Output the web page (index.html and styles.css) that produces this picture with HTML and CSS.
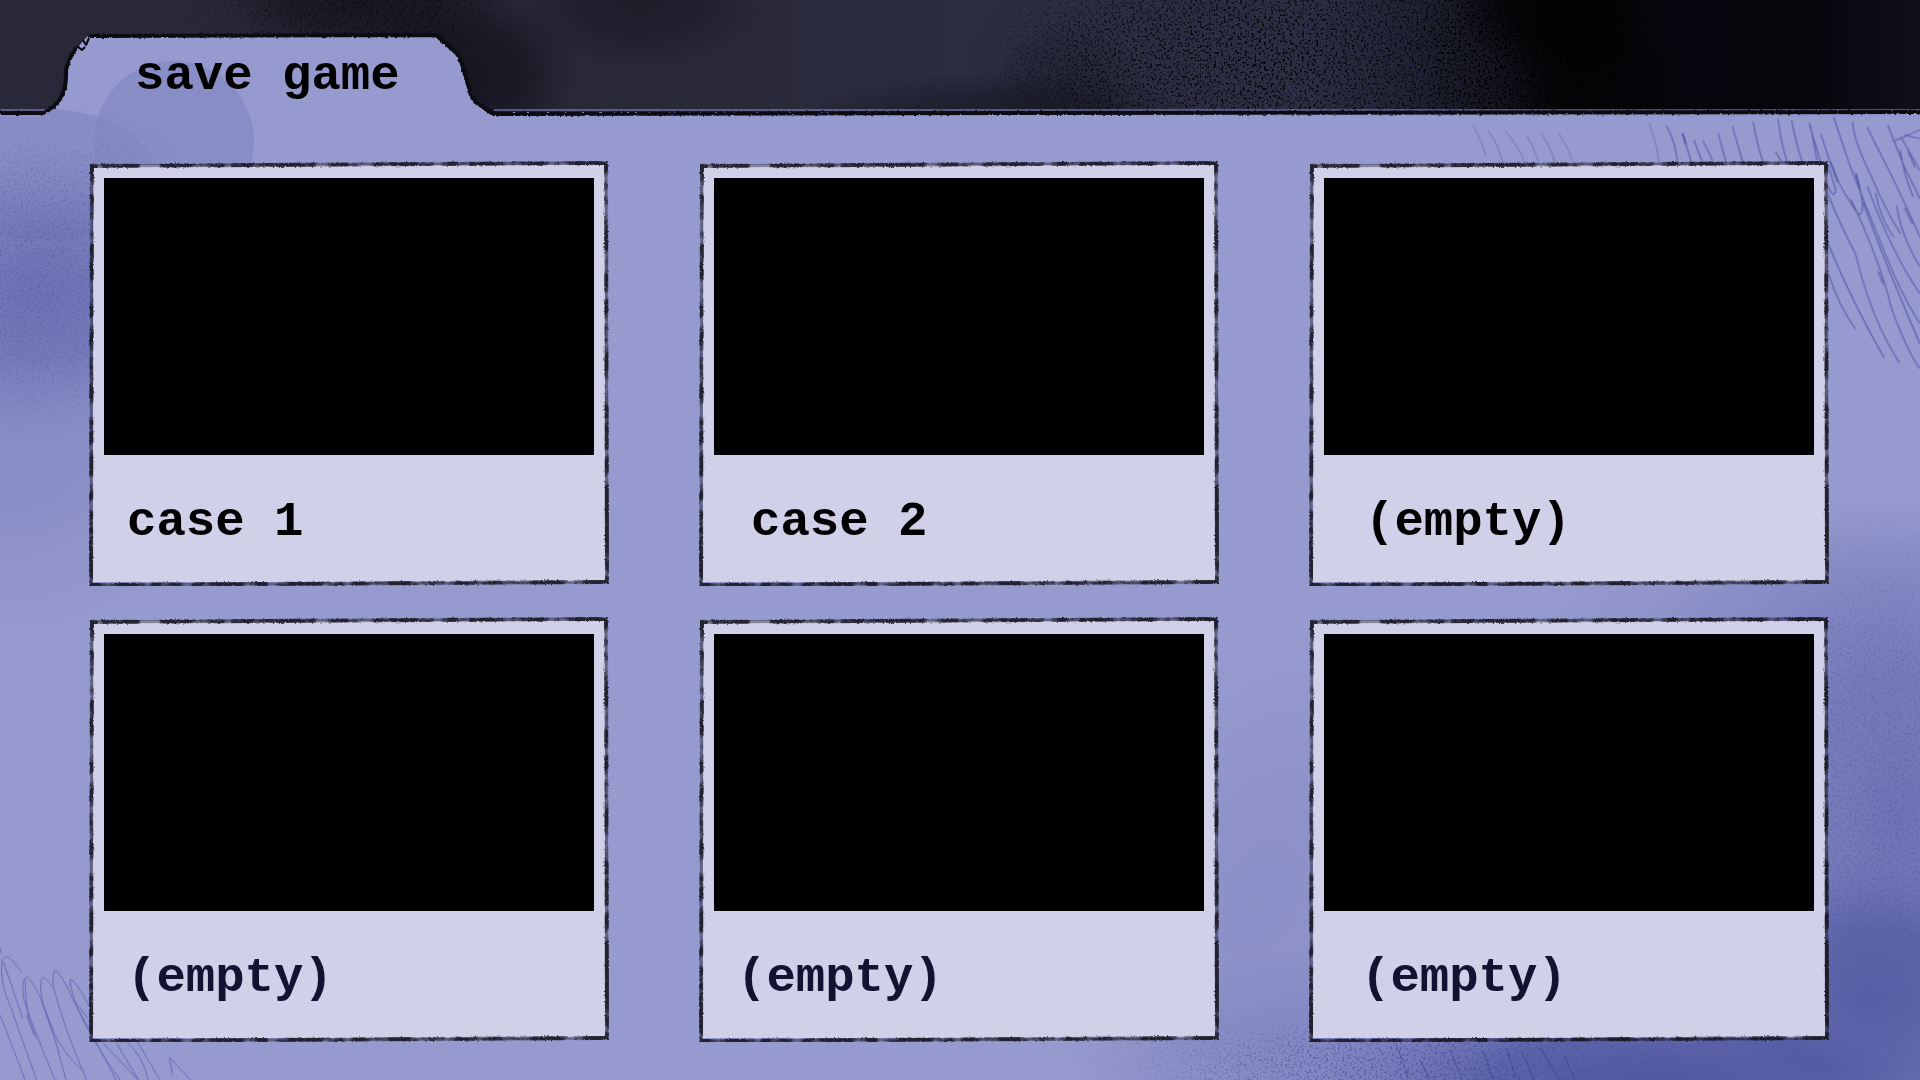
FILE: index.html
```html
<!DOCTYPE html>
<html lang="en">
<head>
<meta charset="utf-8">
<meta name="viewport" content="width=device-width, initial-scale=1">
<title>save game</title>
<link rel="stylesheet" href="styles.css">
</head>
<body>
<svg class="scene" viewBox="0 0 1920 1080" preserveAspectRatio="xMinYMin slice" aria-hidden="true">
  <defs>
    <linearGradient id="night" x1="0" x2="1">
      <stop offset="0" stop-color="#292839"/><stop offset=".4" stop-color="#292939"/><stop offset=".47" stop-color="#2b2c40"/>
      <stop offset=".68" stop-color="#2d2e43"/><stop offset=".73" stop-color="#222335"/>
      <stop offset=".81" stop-color="#0a0b10"/><stop offset=".86" stop-color="#06070e"/>
      <stop offset=".94" stop-color="#05060b"/><stop offset="1" stop-color="#10101b"/>
    </linearGradient>
    <radialGradient id="ink"><stop offset="0" stop-color="#13131d"/><stop offset=".5" stop-color="#13131d" stop-opacity=".75"/><stop offset="1" stop-color="#13131d" stop-opacity="0"/></radialGradient>
    <radialGradient id="void"><stop offset="0" stop-color="#000"/><stop offset=".5" stop-color="#000" stop-opacity=".8"/><stop offset="1" stop-color="#000" stop-opacity="0"/></radialGradient>
    <radialGradient id="haze"><stop offset="0" stop-color="#676cb1"/><stop offset=".45" stop-color="#696eb2" stop-opacity=".75"/><stop offset="1" stop-color="#7b80bf" stop-opacity="0"/></radialGradient>
    <radialGradient id="deep"><stop offset="0" stop-color="#4a509b"/><stop offset=".5" stop-color="#4f559f" stop-opacity=".8"/><stop offset="1" stop-color="#6469b2" stop-opacity="0"/></radialGradient>
    <filter id="specks" x="0" y="0" width="1" height="1" color-interpolation-filters="sRGB">
      <feTurbulence type="fractalNoise" baseFrequency=".42" numOctaves="2" seed="4"/>
      <feColorMatrix values="0 0 0 0 0  0 0 0 0 0  0 0 0 0 0  9 0 0 0 -4.9" result="n"/>
      <feComposite in="SourceGraphic" in2="n" operator="in"/>
    </filter>
    <filter id="rough" x="-5%" y="-5%" width="110%" height="110%" color-interpolation-filters="sRGB">
      <feTurbulence type="fractalNoise" baseFrequency=".35" numOctaves="2" seed="8" result="n"/>
      <feDisplacementMap in="SourceGraphic" in2="n" scale="3" xChannelSelector="R" yChannelSelector="G"/>
    </filter>
    <filter id="pencil" filterUnits="userSpaceOnUse" x="-8" y="-8" width="540" height="445" color-interpolation-filters="sRGB">
      <feTurbulence type="fractalNoise" baseFrequency=".5" numOctaves="2" seed="3" result="n"/>
      <feDisplacementMap in="SourceGraphic" in2="n" scale="3" xChannelSelector="R" yChannelSelector="G" result="d"/>
      <feTurbulence type="fractalNoise" baseFrequency=".07" numOctaves="5" seed="12"/>
      <feColorMatrix values="0 0 0 0 0  0 0 0 0 0  0 0 0 0 0  4 0 0 0 -1.2" result="m"/>
      <feComposite in="d" in2="m" operator="in"/>
    </filter>
  </defs>

  <rect width="1920" height="1080" fill="#969ace"/>

  <!-- watercolour shading on the folder -->
  <g fill="#8388c2">
    <circle cx="174" cy="141" r="80" opacity=".75"/>
    <ellipse cx="45" cy="175" rx="110" ry="66" opacity=".7"/>
  </g>
  <ellipse cx="40" cy="290" rx="210" ry="150" fill="url(#haze)" opacity=".9"/>
  <ellipse cx="10" cy="420" rx="230" ry="240" fill="url(#haze)" opacity=".3"/>
  <ellipse cx="1840" cy="640" rx="320" ry="150" fill="url(#haze)" opacity=".35"/>
  <ellipse cx="1900" cy="820" rx="220" ry="320" fill="url(#haze)" opacity=".85"/>
  <ellipse cx="1560" cy="1060" rx="520" ry="130" fill="url(#haze)" opacity=".6"/>
  <ellipse cx="1260" cy="900" rx="180" ry="290" fill="url(#haze)" opacity=".22" transform="rotate(20 1260 900)"/>
  <ellipse cx="1870" cy="1000" rx="190" ry="150" fill="url(#deep)" opacity=".75"/>
  <ellipse cx="1660" cy="1080" rx="340" ry="90" fill="url(#deep)" opacity=".85"/>
  <g filter="url(#specks)">
    <ellipse cx="40" cy="270" rx="220" ry="190" fill="url(#deep)" opacity=".3"/>
    <ellipse cx="1880" cy="820" rx="230" ry="340" fill="url(#deep)" opacity=".3"/>
    <ellipse cx="1480" cy="1070" rx="400" ry="70" fill="url(#deep)" opacity=".7"/>
  </g>

  <!-- hatching, top right -->
  <g transform="translate(1280 0) scale(.408 .3333)" fill="none" stroke="#4348a0" stroke-width="3" stroke-linecap="round">
    <path opacity=".6" stroke-width="2" d="M473 376Q490 410 505 468M509 391Q535 430 546 488M553 394Q585 440 600 488M606 409Q625 450 635 488M640 400Q665 445 674 488M684 400Q706 440 716 480M905 371Q925 430 928 486"/>
    <path opacity=".7" d="M948 379Q970 430 974 486M987 402L1008 486M1015 421L1035 486M1037 423L1062 486M1074 400L1093 486M1109 379L1134 486M1160 366Q1168 430 1184 486M1221 358Q1226 420 1243 486M1215 456L1230 486M1254 362Q1265 430 1280 486M1297 370L1325 486M1300 376L1316 480M1326 404L1352 500"/>
    <path opacity=".7" d="M1350 486Q1370 560 1400 610Q1425 670 1428 620Q1425 570 1411 520M1357 352L1398 500Q1430 600 1470 720Q1520 880 1568 970M1404 366Q1405 420 1450 530Q1480 620 1520 700M1439 382L1500 530Q1540 630 1568 710M1490 376L1530 500L1568 595M1504 424L1568 390M1530 405L1568 416M1520 450Q1530 530 1552 590M1522 412L1568 510M1342 580Q1375 680 1410 760Q1450 960 1518 1088M1343 730Q1400 900 1480 1072M1344 820Q1370 920 1410 986M1400 600Q1470 780 1500 930Q1540 1060 1568 1105M1440 560Q1500 760 1568 880M1460 580Q1470 650 1503 710M1512 618Q1520 700 1568 800M1430 610Q1480 780 1568 1030M1345 500L1362 570Q1356 600 1344 560"/>
    <path opacity=".5" stroke-width="5" d="M987 402L994 430M1354 500L1366 545M1412 525L1420 560M1532 625L1550 670M1540 455L1556 500M1466 815L1478 850"/>
  </g>
  <!-- hatching, bottom corners -->
  <g transform="translate(0 900) scale(.3333)" fill="none" stroke="#4348a0" stroke-width="3" opacity=".55">
    <path d="M0 145L5 162M65 218Q20 150 7 180Q-5 240 35 330Q70 430 110 540M0 345Q30 420 75 540M10 185L68 355M165 540Q90 360 72 300Q62 240 80 230Q95 240 120 290Q150 370 168 430L198 540M160 265Q135 225 125 235Q115 270 135 330Q160 430 245 510M260 540Q190 380 160 260Q155 205 170 213Q200 250 220 300L268 360M268 320Q230 245 212 238Q205 245 230 320Q280 430 360 540M220 300L290 430L348 540M75 240Q80 380 110 415M310 430L415 540M350 430L415 540M380 425Q430 470 445 540M412 425L480 540M518 525L508 472L572 540"/>
    <path stroke-width="6" opacity=".6" d="M80 345L105 405M135 330L160 395"/>
  </g>
  <g fill="none" stroke="#363c8b" stroke-width="1" opacity=".6">
    <path d="M1396 1043L1408 1078M1420 1060L1430 1080M1450 1050L1462 1080M1483 1050L1493 1080M1506 1048L1516 1078M1521 1050L1534 1080M1540 1048L1560 1080M1564 1055L1575 1080"/>
  </g>

  <!-- night sky behind the folder -->
  <path id="sky" fill="url(#night)" d="M0 0H1920V112H492L478 105Q472 100 469 84L461 60Q458 54 452 50L436 35L88 36Q81 42 74 54L66 69Q68 90 59 101Q52 110 43 114H0Z"/>
  <clipPath id="skyclip"><use href="#sky"/></clipPath>
  <g clip-path="url(#skyclip)">
    <ellipse cx="365" cy="0" rx="145" ry="60" fill="url(#ink)" opacity=".8"/>
    <ellipse cx="465" cy="75" rx="115" ry="85" fill="url(#ink)" opacity=".9"/>
    <ellipse cx="640" cy="0" rx="130" ry="75" fill="url(#ink)" opacity=".5"/>
    <ellipse cx="1000" cy="120" rx="200" ry="50" fill="url(#ink)" opacity=".6"/>
    <ellipse cx="1070" cy="90" rx="80" ry="70" fill="url(#ink)" opacity=".35"/>
    <ellipse cx="1560" cy="0" rx="110" ry="80" fill="url(#void)" opacity=".8"/>
    <ellipse cx="1600" cy="80" rx="100" ry="80" fill="url(#void)" opacity=".6"/>
    <g filter="url(#specks)">
      <ellipse cx="360" cy="10" rx="180" ry="60" fill="url(#void)" opacity=".4"/>
      <ellipse cx="1180" cy="60" rx="210" ry="110" fill="url(#void)" opacity=".7"/>
      <ellipse cx="1350" cy="60" rx="230" ry="120" fill="url(#void)" opacity=".7"/>
      <ellipse cx="1510" cy="50" rx="110" ry="120" fill="url(#void)"/>
    </g>
  </g>

  <!-- folder outline -->
  <g fill="none" stroke-linejoin="round">
    <path stroke="#8f94d6" stroke-width="1" d="M0 110H45M494 110H1920M0 116H44M494 116H1920"/>
    <path stroke="#0b0b12" stroke-width="4" filter="url(#rough)" d="M0 113H43Q54 108 60 99Q67 88 66 70Q68 60 76 48M88 36L436 35L452 49Q459 54 462 64L470 92Q472 101 480 105L493 114L1000 113L1920 112"/>
    <path stroke="#050508" stroke-width="2" d="M77 46L82 50L85 47M83 40L86 45L89 38"/>
  </g>
  <symbol id="frame" viewBox="0 0 520 425" preserveAspectRatio="none">
    <g fill="none" stroke="#15151f" stroke-linecap="round">
      <path stroke-width="3" opacity=".4" d="M3 5L517 2L518 421L2 424Z"/>
      <path stroke-width="4" opacity=".85" filter="url(#pencil)" d="M3 5L517 2L518 421L2 424Z"/>
    </g>
  </symbol>
</svg>

<header class="tab"><h1 class="title">save game</h1></header>

<main class="slots">
  <button class="slot" type="button"><span class="shot"></span><span class="name">case 1</span><svg class="edge" aria-hidden="true"><use href="#frame"/></svg></button>
  <button class="slot mid" type="button"><span class="shot"></span><span class="name">case 2</span><svg class="edge" aria-hidden="true"><use href="#frame"/></svg></button>
  <button class="slot far" type="button"><span class="shot"></span><span class="name">(empty)</span><svg class="edge" aria-hidden="true"><use href="#frame"/></svg></button>
  <button class="slot unused" type="button"><span class="shot"></span><span class="name">(empty)</span><svg class="edge" aria-hidden="true"><use href="#frame"/></svg></button>
  <button class="slot unused" type="button"><span class="shot"></span><span class="name">(empty)</span><svg class="edge" aria-hidden="true"><use href="#frame"/></svg></button>
  <button class="slot unused mid" type="button"><span class="shot"></span><span class="name">(empty)</span><svg class="edge" aria-hidden="true"><use href="#frame"/></svg></button>
</main>
</body>
</html>
```
FILE: styles.css
```css
* { box-sizing: border-box; }

body {
  position: relative;
  min-height: 100vh;
  margin: 0;
  overflow-x: hidden;
  background: #969ace;
  color: #000;
  font-family: "Courier New", "Liberation Mono", monospace;
  font-weight: 700;
}

.scene {
  position: absolute;
  inset: 0;
  z-index: -1;
  width: 100%;
  height: 100%;
}

.tab {
  padding: 48px 133px 0;
}

.title {
  margin: 0;
  font-size: 49px;
  line-height: 56px;
}

.slots {
  display: grid;
  grid-template-columns: repeat(3, 1fr);
  gap: 39px 98px;
  padding: 61px 95px 42px 93px;
}

.slot {
  position: relative;
  display: flex;
  flex-direction: column;
  padding: 13px 11px 0;
  border: 0;
  background: #d1d0e9;
  color: #000;
  font: inherit;
  text-align: left;
  cursor: pointer;
}

.shot {
  width: 100%;
  aspect-ratio: 490 / 277;
  background: #000;
}

.name {
  padding: 39px 22px 32px 23px;
  font-size: 49px;
  line-height: 56px;
}

.mid .name { padding-left: 37px; }
.far .name { padding-left: 41px; }
.unused { color: #121231; }

.title { padding-left: 2px; }

.edge {
  position: absolute;
  top: -4px;
  left: -4px;
  width: calc(100% + 8px);
  height: calc(100% + 8px);
  overflow: visible;
  pointer-events: none;
}
```
